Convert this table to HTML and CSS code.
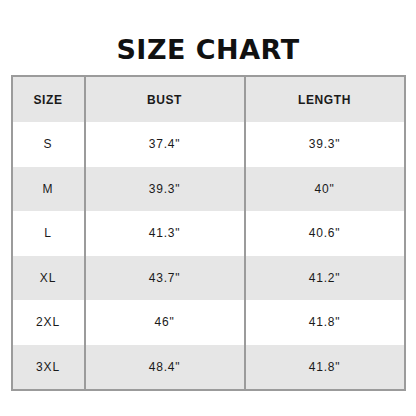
FILE: index.html
```html
<!DOCTYPE html>
<html>
<head>
<meta charset="utf-8">
<link rel="stylesheet" href="styles.css">
</head>
<body>
<div class="page">
  <h1 class="title">SIZE CHART</h1>
  <table class="chart">
    <thead>
      <tr><th class="c1">SIZE</th><th class="c2">BUST</th><th class="c3">LENGTH</th></tr>
    </thead>
    <tbody>
      <tr><td>S</td><td>37.4"</td><td>39.3"</td></tr>
      <tr class="alt"><td>M</td><td>39.3"</td><td>40"</td></tr>
      <tr><td>L</td><td>41.3"</td><td>40.6"</td></tr>
      <tr class="alt"><td>XL</td><td>43.7"</td><td>41.2"</td></tr>
      <tr><td>2XL</td><td>46"</td><td>41.8"</td></tr>
      <tr class="alt"><td>3XL</td><td>48.4"</td><td>41.8"</td></tr>
    </tbody>
  </table>
</div>
</body>
</html>
```
FILE: styles.css
```css
html, body {
  margin: 0;
  padding: 0;
  background: #ffffff;
}
.page {
  width: 416px;
  height: 416px;
  padding-top: 34px;
  box-sizing: border-box;
  display: flex;
  flex-direction: column;
  align-items: center;
}
.title {
  margin: 0 0 9px 0;
  font-family: "DejaVu Sans", sans-serif;
  font-weight: 900;
  font-size: 27px;
  line-height: 32px;
  letter-spacing: 0.5px;
  color: #111;
}
.chart {
  width: 395px;
  border-collapse: collapse;
  border: 2px solid #9b9b9b;
  table-layout: fixed;
  font-family: "Liberation Sans", Arial, sans-serif;
  color: #1a1a1a;
}
.chart th, .chart td {
  border-left: 2px solid #9b9b9b;
  border-right: 2px solid #9b9b9b;
  text-align: center;
  padding: 0;
}
.chart th {
  background: #e6e6e6;
  height: 45px;
  font-size: 12px;
  font-weight: bold;
  letter-spacing: 0.6px;
}
.chart .c1 { width: 71px; }
.chart .c2 { width: 158px; }
.chart td {
  height: 44.5px;
  font-size: 12px;
  letter-spacing: 0.8px;
  background: #ffffff;
}
.chart tr.alt td {
  background: #e6e6e6;
}
```
